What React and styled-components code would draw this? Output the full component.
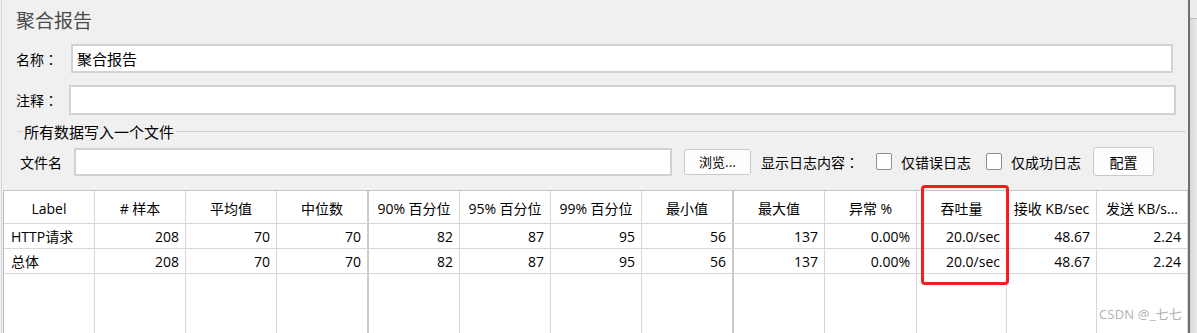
import React from "react";
import styled, { createGlobalStyle } from "styled-components";

const Global = createGlobalStyle`
  html, body { margin: 0; padding: 0; background: #f0f0f0; }
  body { font-family: "Open Sans", "Noto Sans CJK SC", sans-serif; color: #000; }
  * { box-sizing: border-box; }
`;

const FONT = `"Open Sans", "Noto Sans CJK SC", sans-serif`;

const Root = styled.div`
  display: flex;
  width: 1197px;
  height: 333px;
  overflow: hidden;
  padding-left: 1px;
  background: #f0f0f0;
`;

const Main = styled.div`
  position: relative;
  width: 1187px;
  display: flex;
  flex-direction: column;
  border-left: 1px solid #d8d8d8;
`;

const Divider = styled.div`
  width: 2px;
  background: #6e6e6e;
`;

const SideStrip = styled.div`
  flex: 1;
  background: linear-gradient(to right, #d9d9d9, #e8e8e8);
  display: flex;
  flex-direction: column;
`;

const SideTop = styled.div`
  height: 19px;
  border-bottom: 1px solid #b9b9b9;
  background: #ececec;
`;

const Title = styled.div`
  padding: 8px 0 0 14px;
  height: 32px;
  line-height: 24px;
  font-size: 19px;
  color: #4a4a4a;
  font-family: "Noto Sans CJK SC", sans-serif;
`;

const FieldRow = styled.div`
  display: flex;
  align-items: center;
  margin-top: 12px;
  padding-left: 14px;
  height: ${(p) => p.$h}px;
`;

const FieldLabel = styled.span`
  width: ${(p) => p.$w}px;
  font-size: 14px;
  font-family: "Noto Sans CJK SC", sans-serif;
  white-space: nowrap;
`;

const Colon = styled.span`
  font-family: "Noto Sans CJK JP", sans-serif;
`;

const TextInput = styled.div`
  width: ${(p) => p.$w}px;
  height: 100%;
  background: #fff;
  border: 2px solid #d2d2d2;
  padding-left: 4px;
  display: flex;
  align-items: center;
  font-size: 15px;
  font-family: "Noto Sans CJK SC", sans-serif;
`;

const GroupHeader = styled.div`
  display: flex;
  align-items: center;
  margin-top: 6px;
  height: 20px;
  padding-left: 15px;
  padding-right: 2px;
`;

const GroupLine = styled.div`
  height: 1px;
  background: #d3d3d3;
  flex: ${(p) => (p.$grow ? 1 : "none")};
  width: ${(p) => (p.$grow ? "auto" : "6px")};
`;

const GroupTitle = styled.span`
  font-size: 15px;
  padding: 0 2px 0 1px;
  font-family: "Noto Sans CJK SC", sans-serif;
  white-space: nowrap;
`;

const FileRow = styled.div`
  display: flex;
  align-items: center;
  margin-top: 6px;
  height: 29px;
  padding-left: 18px;
`;

const FileInput = styled(TextInput)`
  height: 28px;
`;

const Button = styled.div`
  width: ${(p) => p.$w}px;
  height: ${(p) => p.$h}px;
  margin-left: ${(p) => p.$ml}px;
  background: #fdfdfd;
  border: 1px solid #c9c9c9;
  border-radius: 3px;
  display: flex;
  align-items: center;
  justify-content: center;
  font-size: ${(p) => p.$fs}px;
  font-family: "Noto Sans CJK SC", sans-serif;
`;

const InlineText = styled.span`
  margin-left: ${(p) => p.$ml}px;
  font-size: 14px;
  font-family: "Noto Sans CJK SC", sans-serif;
  white-space: nowrap;
`;

const Check = styled.span`
  width: 16px;
  height: 17px;
  margin-left: ${(p) => p.$ml}px;
  background: #fff;
  border: 1px solid #8f8f8f;
  border-radius: 2px;
`;

const Table = styled.div`
  position: relative;
  margin-top: 14px;
  margin-left: 1px;
  flex: 1;
  display: grid;
  grid-template-columns: ${(p) => p.$cols.map((c) => c + "px").join(" ")};
  grid-template-rows: 33px 25px 25px 1fr;
  background: #fff;
  border-top: 1px solid #c6c6c6;
  border-left: 1px solid #bcbcbc;
  font-family: ${FONT};
  font-size: 14px;
`;

const Cell = styled.div`
  display: flex;
  align-items: center;
  justify-content: ${(p) =>
    p.$align === "left" ? "flex-start" : p.$align === "center" ? "center" : "flex-end"};
  padding: ${(p) => (p.$align === "left" ? "0 0 0 7px" : p.$align === "center" ? "0 2px" : "0 6px 0 0")};
  border-right: ${(p) => (p.$strong ? "2px solid #cbcbcb" : "1px solid #d8d8d8")};
  border-bottom: ${(p) => (p.$filler ? "none" : "1px solid #d8d8d8")};
  white-space: nowrap;
  overflow: hidden;
  padding-top: ${(p) => (p.$head ? "2px" : "0")};
`;

const Highlight = styled.div`
  position: absolute;
  left: 917px;
  top: -6px;
  width: 88px;
  height: 100px;
  border: 3px solid #f51d1d;
  border-radius: 4px;
  pointer-events: none;
`;

const Watermark = styled.div`
  position: absolute;
  right: 6px;
  bottom: 10px;
  font-size: 13px;
  color: #b0b0b0;
  font-family: ${FONT};
  letter-spacing: 0.2px;
`;

const COLS = [91, 91, 91, 92, 91, 91, 91, 92, 91, 92, 90, 90, 91];
const STRONG = [3, 7];

const HEADERS = [
  "Label",
  "# 样本",
  "平均值",
  "中位数",
  "90% 百分位",
  "95% 百分位",
  "99% 百分位",
  "最小值",
  "最大值",
  "异常 %",
  "吞吐量",
  "接收 KB/sec",
  "发送 KB/s...",
];

const ROWS = [
  ["HTTP请求", "208", "70", "70", "82", "87", "95", "56", "137", "0.00%", "20.0/sec", "48.67", "2.24"],
  ["总体", "208", "70", "70", "82", "87", "95", "56", "137", "0.00%", "20.0/sec", "48.67", "2.24"],
];

export default function App() {
  return (
    <>
      <Global />
      <Root>
        <Main>
          <Title>聚合报告</Title>
          <FieldRow $h={29}>
            <FieldLabel $w={55}>名称<Colon>：</Colon></FieldLabel>
            <TextInput $w={1102}>聚合报告</TextInput>
          </FieldRow>
          <FieldRow $h={30}>
            <FieldLabel $w={53}>注释<Colon>：</Colon></FieldLabel>
            <TextInput $w={1107} />
          </FieldRow>
          <GroupHeader>
            <GroupLine />
            <GroupTitle>所有数据写入一个文件</GroupTitle>
            <GroupLine $grow />
          </GroupHeader>
          <FileRow>
            <FieldLabel $w={54}>文件名</FieldLabel>
            <FileInput $w={598} />
            <Button $w={67} $h={26} $ml={12} $fs={13}>浏览...</Button>
            <InlineText $ml={10}>显示日志内容<Colon>：</Colon></InlineText>
            <Check $ml={17} />
            <InlineText $ml={9}>仅错误日志</InlineText>
            <Check $ml={15} />
            <InlineText $ml={9}>仅成功日志</InlineText>
            <Button $w={61} $h={29} $ml={12} $fs={14}>配置</Button>
          </FileRow>
          <Table $cols={COLS}>
            {HEADERS.map((h, i) => (
              <Cell key={"h" + i} $align="center" $head $strong={STRONG.includes(i)}>
                {h}
              </Cell>
            ))}
            {ROWS.map((row, r) =>
              row.map((v, i) => (
                <Cell
                  key={r + "-" + i}
                  $align={i === 0 ? "left" : "right"}
                  $strong={STRONG.includes(i)}
                >
                  {v}
                </Cell>
              ))
            )}
            {COLS.map((_, i) => (
              <Cell key={"f" + i} $filler $strong={STRONG.includes(i)} />
            ))}
            <Highlight />
            <Watermark>CSDN @_七七</Watermark>
          </Table>
        </Main>
        <Divider />
        <SideStrip>
          <SideTop />
        </SideStrip>
      </Root>
    </>
  );
}
